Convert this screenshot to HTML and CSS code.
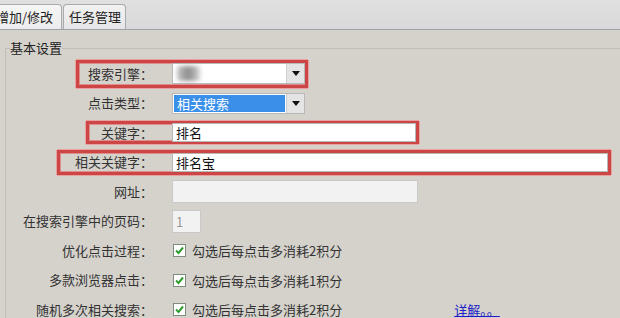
FILE: index.html
```
<!DOCTYPE html>
<html lang="zh-CN">
<head>
  <meta charset="UTF-8" />
  <title>任务设置</title>
  <link rel="stylesheet" href="styles.css">
</head>
<body>
  <div class="tabs">
    <div class="tab active">增加/修改</div>
    <div class="tab">任务管理</div>
  </div>

  <div class="panel">
    <fieldset class="group">
      <legend>基本设置</legend>

      <div class="row hl tall tight">
        <div class="lab"><span>搜索引擎：</span></div>
        <div class="field">
          <div class="select">
            <div class="val"><div class="blur"></div></div>
            <div class="arrow"><i></i></div>
          </div>
        </div>
      </div>

      <div class="row">
        <div class="lab"><span>点击类型：</span></div>
        <div class="field">
          <div class="select">
            <div class="val sel">相关搜索</div>
            <div class="arrow"><i></i></div>
          </div>
        </div>
      </div>

      <div class="row hl">
        <div class="lab"><span>关键字：</span></div>
        <div class="field"><div class="inp w-mid">排名</div></div>
      </div>

      <div class="row hl wide">
        <div class="lab"><span>相关关键字：</span></div>
        <div class="field"><div class="inp w-long">排名宝</div></div>
      </div>

      <div class="row">
        <div class="lab"><span>网址：</span></div>
        <div class="field"><div class="inp off w-url"></div></div>
      </div>

      <div class="row">
        <div class="lab"><span>在搜索引擎中的页码：</span></div>
        <div class="field"><div class="inp off w-num">1</div></div>
      </div>

      <div class="row">
        <div class="lab"><span>优化点击过程：</span></div>
        <div class="field check">
          <span class="chk"><svg width="9" height="9" viewBox="0 0 9 9"><path d="M1 4.5 L3.5 7 L8 1.5" fill="none" stroke="#2e9c2e" stroke-width="2"/></svg></span>
          勾选后每点击多消耗2积分
        </div>
      </div>

      <div class="row">
        <div class="lab"><span>多款浏览器点击：</span></div>
        <div class="field check">
          <span class="chk"><svg width="9" height="9" viewBox="0 0 9 9"><path d="M1 4.5 L3.5 7 L8 1.5" fill="none" stroke="#2e9c2e" stroke-width="2"/></svg></span>
          勾选后每点击多消耗1积分
        </div>
      </div>

      <div class="row">
        <div class="lab"><span>随机多次相关搜索：</span></div>
        <div class="field check">
          <span class="chk"><svg width="9" height="9" viewBox="0 0 9 9"><path d="M1 4.5 L3.5 7 L8 1.5" fill="none" stroke="#2e9c2e" stroke-width="2"/></svg></span>
          勾选后每点击多消耗2积分
          <a class="more" href="#">详解。。</a>
        </div>
      </div>
    </fieldset>
  </div>
</body>
</html>
```

FILE: styles.css
```
* { margin: 0; padding: 0; box-sizing: border-box; }
html, body {
  height: 100%;
  font-family: "Noto Sans CJK SC", "Liberation Sans", sans-serif;
  font-size: 13px;
  color: #333;
  background: #d5d2cc;
  overflow: hidden;
}

/* tab strip */
.tabs {
  height: 30px;
  display: flex;
  align-items: flex-end;
  background: linear-gradient(#e0e0e0, #d9d9d9);
  border-bottom: 1px solid #9ea4a9;
}

.tab {
  height: 25px;
  padding: 0 4px 0 5px;
  border: 1px solid #a9abad;
  border-bottom: none;
  border-radius: 4px 4px 0 0;
  background: linear-gradient(#f2f2f2, #e6e6e6);
  line-height: 23px;
  color: #222;
  white-space: nowrap;
  margin-left: 1px;
}

.tab.active {
  margin-left: -11px;
  padding: 0 8px 0 6px;
  background: linear-gradient(#f6f6f6, #ececec);
}

/* group box */
.panel {
  padding: 10px 0 0 5px;
}

.group {
  border: 1px solid #c2beb7;
  border-right: none;
  border-bottom: none;
  padding: 3px 0 0 0;
  min-width: 0;
}

.group legend {
  margin-left: 4px;
  padding: 0;
  line-height: 16px;
  color: #222;
}

/* form rows */
.row {
  display: flex;
  align-items: center;
  height: 29.5px;
}

.lab {
  width: 166px;
  flex: none;
  display: flex;
  justify-content: flex-end;
}

.lab span {
  padding-right: 19px;
  line-height: 18px;
  white-space: nowrap;
}

.field {
  display: flex;
  align-items: center;
}

/* red annotation box around label + field */
.hl .lab span,
.hl .field {
  height: 23px;
  display: flex;
  align-items: center;
  border: 3px solid #cc4646;
}

.hl .lab span {
  border-right: none;
  padding-left: 12px;
  box-shadow: -1px 0 0 #eaa0a0, 0 -1px 0 #eaa0a0, 0 1px 0 #eaa0a0,
    inset 1px 0 0 #e08c8c, inset 0 1px 0 #e08c8c, inset 0 -1px 0 #e08c8c;
}

.hl .field {
  border-left: none;
  box-shadow: 1px 0 0 #eaa0a0, 0 -1px 0 #eaa0a0, 0 1px 0 #eaa0a0,
    inset -1px 0 0 #e08c8c, inset 0 1px 0 #e08c8c, inset 0 -1px 0 #e08c8c;
}

.hl.tall .lab span,
.hl.tall .field {
  height: 28px;
}

.hl.wide .lab span {
  height: 25px;
  padding-left: 15px;
}

.hl.wide .field {
  height: 25px;
}

.hl.tight .lab span {
  padding-left: 9px;
}

/* combo boxes */
.select {
  display: flex;
  width: 133px;
  height: 21px;
  border: 1px solid #b9b9b9;
  background: #fff;
}

.select .val {
  flex: 1;
  display: flex;
  align-items: center;
}

.select .val.sel {
  margin: 1px;
  padding-left: 3px;
  background: #3a8fe8;
  color: #fff;
  line-height: 17px;
}

.select .arrow {
  width: 18px;
  background: #e4e4e4;
  border-left: 1px solid #cfcfcf;
  display: flex;
  align-items: center;
  justify-content: center;
}

.select .arrow i {
  border-left: 4px solid transparent;
  border-right: 4px solid transparent;
  border-top: 5px solid #111;
}

.blur {
  width: 24px;
  height: 15px;
  margin-left: 4px;
  background: linear-gradient(90deg, #c8c8c8, #8e8e8e 45%, #b0b0b0 75%, #eee);
  border-radius: 3px;
  filter: blur(2px);
}

/* text inputs */
.inp {
  height: 19px;
  border: 1px solid #b8b8b8;
  background: #fff;
  padding-left: 3px;
  line-height: 17px;
  color: #111;
}

.inp.off {
  height: 23px;
  background: #f2f2f2;
  border-color: #c9c9c9;
  color: #999;
  line-height: 21px;
}

.w-mid { width: 244px; }
.w-long { width: 436px; }
.w-url { width: 246px; }
.w-num { width: 29px; height: 24px; }

/* checkboxes */
.check {
  color: #333;
  white-space: nowrap;
}

.chk {
  width: 13px;
  height: 13px;
  margin: 0 6px 0 1px;
  border: 1px solid #7d8e7d;
  background: #fff;
  display: flex;
  align-items: center;
  justify-content: center;
}

.more {
  margin-left: 112px;
  color: #1c1cc8;
  text-decoration: underline;
}
```
